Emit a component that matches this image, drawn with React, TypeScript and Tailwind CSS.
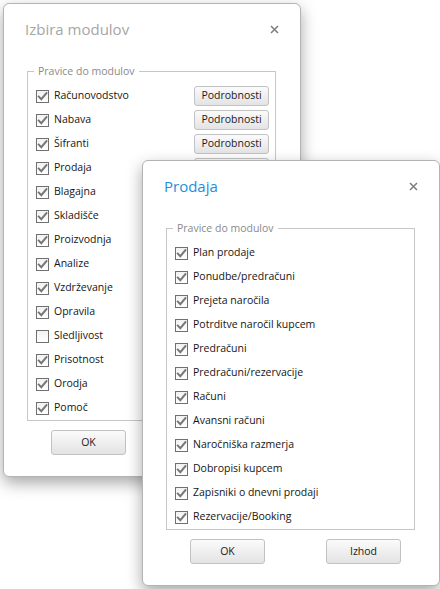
import type { ReactNode } from "react";

type Item = { label: string; checked: boolean; details?: boolean };

const modules: Item[] = [
  { label: "Računovodstvo", checked: true, details: true },
  { label: "Nabava", checked: true, details: true },
  { label: "Šifranti", checked: true, details: true },
  { label: "Prodaja", checked: true, details: true },
  { label: "Blagajna", checked: true },
  { label: "Skladišče", checked: true },
  { label: "Proizvodnja", checked: true },
  { label: "Analize", checked: true },
  { label: "Vzdrževanje", checked: true },
  { label: "Opravila", checked: true },
  { label: "Sledljivost", checked: false },
  { label: "Prisotnost", checked: true },
  { label: "Orodja", checked: true },
  { label: "Pomoč", checked: true },
];

const salesRights: Item[] = [
  { label: "Plan prodaje", checked: true },
  { label: "Ponudbe/predračuni", checked: true },
  { label: "Prejeta naročila", checked: true },
  { label: "Potrditve naročil kupcem", checked: true },
  { label: "Predračuni", checked: true },
  { label: "Predračuni/rezervacije", checked: true },
  { label: "Računi", checked: true },
  { label: "Avansni računi", checked: true },
  { label: "Naročniška razmerja", checked: true },
  { label: "Dobropisi kupcem", checked: true },
  { label: "Zapisniki o dnevni prodaji", checked: true },
  { label: "Rezervacije/Booking", checked: true },
];

function Checkbox({ checked }: { checked: boolean }) {
  return (
    <span className="flex h-[13px] w-[13px] shrink-0 items-center justify-center border border-[#707070] bg-linear-to-b from-[#f2f2f2] to-white">
      {checked && (
        <svg width="11" height="11" viewBox="0 0 11 11" fill="none">
          <path d="M1.8 5.6 L4.3 8.2 L9.4 2.2" stroke="#767676" strokeWidth="2" strokeLinecap="square" />
        </svg>
      )}
    </span>
  );
}

function Button({ children, className = "" }: { children: ReactNode; className?: string }) {
  return (
    <button
      className={
        "flex w-[75px] items-center justify-center rounded-[3px] border border-[#c2c2c2] bg-linear-to-b from-[#fbfbfb] to-[#e3e3e3] text-[10.5px] text-[#1a1a1a] " +
        className
      }
    >
      {children}
    </button>
  );
}

function CloseIcon() {
  return (
    <svg width="9" height="9" viewBox="0 0 9 9" fill="none">
      <path d="M1 1 L8 8 M8 1 L1 8" stroke="#7d7d7d" strokeWidth="1.5" />
    </svg>
  );
}

function Dialog({
  title,
  titleColor,
  className,
  items,
  withDetails,
  withExit,
}: {
  title: string;
  titleColor: string;
  className: string;
  items: Item[];
  withDetails?: boolean;
  withExit?: boolean;
}) {
  return (
    <div
      className={
        "absolute flex w-[298px] flex-col rounded-[6px] border border-[#b4b4b4] bg-white shadow-[0_6px_16px_rgba(0,0,0,0.35)] " +
        className
      }
    >
      <div className="mt-[15px] flex h-[20px] items-center justify-between pl-[21px] pr-[21px]">
        <span className={"text-[15px] leading-[20px] " + titleColor}>{title}</span>
        <CloseIcon />
      </div>

      <fieldset className="ml-[23px] mt-[24px] w-[249px] border border-[#c6c6c6] pt-[5px]">
        <legend className="ml-[6px] px-[4px] text-[10.5px] leading-[16px] text-[#8a8a8a]">
          Pravice do modulov
        </legend>
        {items.map((item) => (
          <div key={item.label} className="flex h-[24px] items-center justify-between pl-[8px] pr-[6px]">
            <label className="flex items-center gap-[5px] text-[10.5px] text-[#151515]">
              <Checkbox checked={item.checked} />
              {item.label}
            </label>
            {withDetails && item.details && <Button className="h-[20px]">Podrobnosti</Button>}
          </div>
        ))}
      </fieldset>

      <div className="mt-[9px] flex gap-[61px] pl-[47px]">
        <Button className="h-[25px]">OK</Button>
        {withExit && <Button className="h-[25px]">Izhod</Button>}
      </div>
    </div>
  );
}

export default function App() {
  return (
    <div className="relative h-[589px] w-[440px] overflow-hidden bg-white font-['Open_Sans',sans-serif]">
      <Dialog
        title="Izbira modulov"
        titleColor="text-[#a6a6a6]"
        className="left-[3px] top-[3px] h-[474px]"
        items={modules}
        withDetails
      />
      <Dialog
        title="Prodaja"
        titleColor="text-[#1c8fdc]"
        className="left-[142px] top-[160px] h-[426px]"
        items={salesRights}
        withExit
      />
    </div>
  );
}
